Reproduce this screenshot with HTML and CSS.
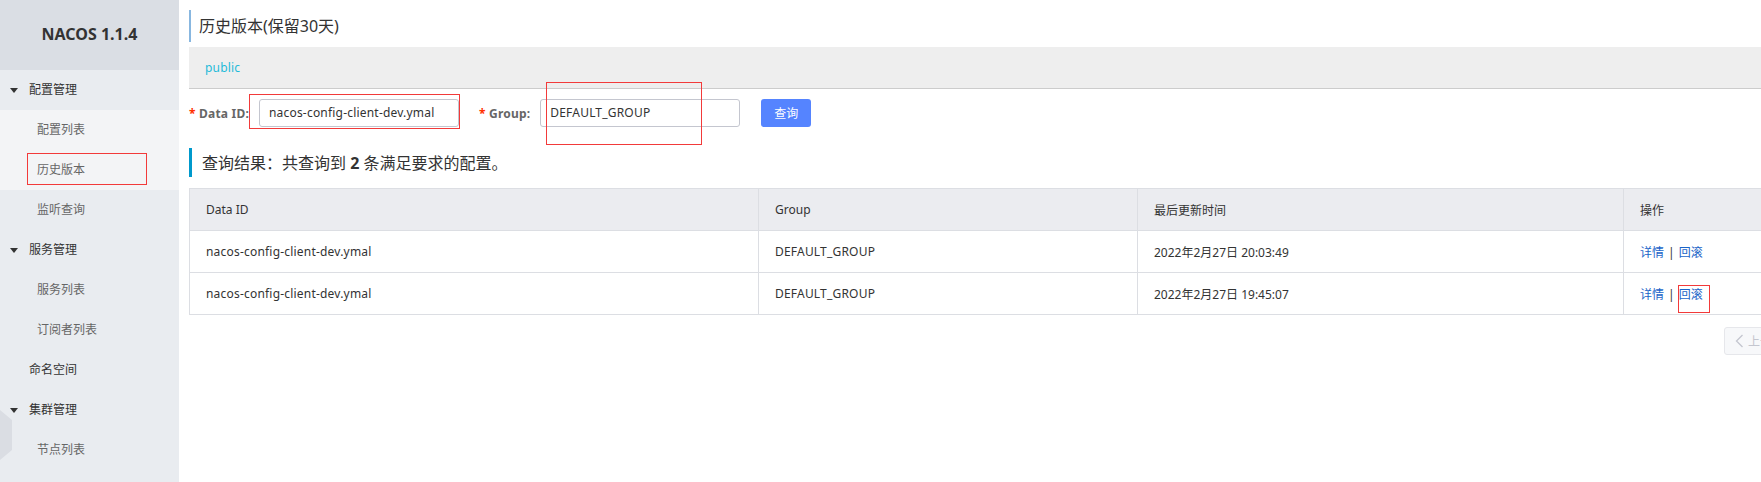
FILE: index.html
```html
<!DOCTYPE html>
<html lang="zh-CN">
<head>
<meta charset="utf-8">
<title>NACOS 1.1.4 - 历史版本</title>
<link rel="stylesheet" href="styles.css">
</head>
<body>
<div class="app">
  <aside class="sidebar">
    <div class="brand">NACOS 1.1.4</div>
    <ul class="menu">
      <li class="row top"><span class="caret"></span>配置管理</li>
      <li class="row sub light">配置列表</li>
      <li class="row sub light active">历史版本</li>
      <li class="row sub">监听查询</li>
      <li class="row top"><span class="caret"></span>服务管理</li>
      <li class="row sub">服务列表</li>
      <li class="row sub">订阅者列表</li>
      <li class="row plain">命名空间</li>
      <li class="row top"><span class="caret"></span>集群管理</li>
      <li class="row sub">节点列表</li>
    </ul>
    <div class="hex"></div>
  </aside>

  <main class="main">
    <div class="content">
      <h1 class="page-title">历史版本(保留30天)</h1>
      <div class="ns-bar"><span class="ns-link">public</span></div>

      <form class="search-form">
        <label class="field-label"><span class="req">*</span> Data ID:</label>
        <div class="input"><span>nacos-config-client-dev.ymal</span></div>
        <label class="field-label group-label"><span class="req">*</span> Group:</label>
        <div class="input"><span>DEFAULT_GROUP</span></div>
        <button type="button" class="btn-primary">查询</button>
      </form>

      <div class="result-title">查询结果：共查询到 <strong>2</strong> 条满足要求的配置。</div>

      <table class="data-table">
        <thead>
          <tr>
            <th class="c-id">Data ID</th>
            <th class="c-group">Group</th>
            <th class="c-time">最后更新时间</th>
            <th class="c-op">操作</th>
          </tr>
        </thead>
        <tbody>
          <tr>
            <td class="latin">nacos-config-client-dev.ymal</td>
            <td class="latin">DEFAULT_GROUP</td>
            <td>2022年2月27日 20:03:49</td>
            <td><a class="lnk">详情</a><span class="sep">|</span><a class="lnk">回滚</a></td>
          </tr>
          <tr>
            <td class="latin">nacos-config-client-dev.ymal</td>
            <td class="latin">DEFAULT_GROUP</td>
            <td>2022年2月27日 19:45:07</td>
            <td><a class="lnk">详情</a><span class="sep">|</span><a class="lnk">回滚</a></td>
          </tr>
        </tbody>
      </table>

      <div class="pager">
        <button type="button" class="pg-btn"><svg class="chev" width="9" height="14" viewBox="0 0 9 14"><path d="M7.5 1 L1.5 7 L7.5 13" fill="none" stroke="currentColor" stroke-width="1.3"/></svg>上一页</button>
      </div>
    </div>
  </main>

  <div class="mark mark-side"></div>
  <div class="mark mark-dataid"></div>
  <div class="mark mark-group"></div>
  <div class="mark mark-rollback"></div>
</div>
</body>
</html>
```

FILE: styles.css
```css
* { box-sizing: border-box; }
html, body {
  margin: 0;
  padding: 0;
  width: 1761px;
  height: 482px;
  overflow: hidden;
  background: #fff;
}
body {
  font-family: "Noto Sans", "Noto Sans CJK SC", sans-serif;
  font-size: 12px;
  color: #333;
}
.app {
  position: relative;
  display: flex;
  height: 482px;
  overflow: hidden;
}

/* ---------- sidebar ---------- */
.sidebar {
  position: relative;
  flex: 0 0 179px;
  width: 179px;
  background: #e9ecf0;
}
.brand {
  height: 70px;
  line-height: 68px;
  text-align: center;
  background: #dadee4;
  font-size: 16px;
  font-weight: 700;
  color: #333;
}
.menu {
  list-style: none;
  margin: 0;
  padding: 0;
}
.row {
  height: 40px;
  line-height: 40px;
  font-size: 12px;
  display: flex;
  align-items: center;
  white-space: nowrap;
}
.row.top {
  padding-left: 10px;
  color: #333;
}
.row.plain {
  padding-left: 29px;
  color: #333;
}
.row.sub {
  padding-left: 37px;
  color: #666;
}
.row.light { background: #f3f4f6; }
.caret {
  width: 0;
  height: 0;
  border-top: 5px solid #333;
  border-left: 4px solid transparent;
  border-right: 4px solid transparent;
  margin-right: 11px;
}
.hex {
  position: absolute;
  left: 0;
  top: 410px;
  width: 12px;
  height: 50px;
  background: #dadde3;
  clip-path: polygon(0 0, 100% 20%, 100% 80%, 0 100%);
}

/* ---------- main ---------- */
.main {
  flex: 1 1 auto;
  padding-left: 10px;
  overflow: hidden;
}
.content {
  width: 1640px;
}
.page-title {
  margin: 10px 0 0;
  height: 32px;
  line-height: 33px;
  padding-left: 8px;
  border-left: 2px solid #88b7e0;
  font-size: 16px;
  font-weight: 400;
  color: #333;
}
.ns-bar {
  margin-top: 5px;
  height: 42px;
  line-height: 41px;
  padding-left: 16px;
  background: #eee;
  border-bottom: 1px solid #ccc;
}
.ns-link {
  color: #1fbbd9;
  font-size: 12px;
  letter-spacing: 0.2px;
}

.search-form {
  display: flex;
  align-items: center;
  margin-top: 10px;
  height: 28px;
}
.field-label {
  font-weight: 700;
  color: #666;
  font-size: 12px;
  letter-spacing: 0.2px;
  margin-right: 10px;
  white-space: nowrap;
}
.group-label { margin-left: 20px; }
.req {
  color: #ff3000;
  font-weight: 700;
}
.input {
  width: 200px;
  height: 28px;
  border: 1px solid #c4c6cf;
  border-radius: 3px;
  padding: 0 9px;
  line-height: 26px;
  color: #333;
  font-size: 12px;
  letter-spacing: 0.2px;
  background: #fff;
  white-space: nowrap;
  overflow: hidden;
}
.btn-primary {
  margin-left: 21px;
  width: 50px;
  height: 28px;
  border: none;
  border-radius: 3px;
  background: #5584ff;
  color: #fff;
  font-family: inherit;
  font-size: 12px;
  padding: 0;
}

.result-title {
  margin-top: 21px;
  height: 29px;
  line-height: 30px;
  padding-left: 10px;
  border-left: 3px solid #0099cc;
  font-size: 16px;
  color: #333;
}
.result-title strong { font-weight: 700; }

.data-table {
  margin-top: 11px;
  border-collapse: collapse;
  table-layout: fixed;
  width: 1640px;
  border: 1px solid #dcdee3;
}
.data-table th,
.data-table td {
  height: 42px;
  padding: 0 16px;
  text-align: left;
  font-size: 12px;
  font-weight: 400;
  color: #333;
  border: 1px solid #dcdee3;
  white-space: nowrap;
}
.data-table th { background: #ebecf0; }
.data-table .latin { letter-spacing: 0.2px; }
.c-id { width: 569px; }
.c-group { width: 379px; }
.c-time { width: 486px; }
.c-op { width: 206px; }
.lnk {
  color: #1a64c8;
  cursor: pointer;
}
.sep {
  color: #333;
  margin: 0 4px;
}

.pager {
  display: flex;
  margin-top: 12px;
  margin-left: 1535px;
}
.pg-btn {
  display: flex;
  align-items: center;
  gap: 4px;
  height: 28px;
  padding: 0 10px;
  border: 1px solid #e6e7eb;
  border-radius: 3px;
  background: #f7f8fa;
  color: #c4c6cf;
  font-family: inherit;
  font-size: 12px;
  white-space: nowrap;
}
.chev { display: block; }

/* ---------- red annotation boxes ---------- */
.mark {
  position: absolute;
  border: 1px solid #f23a3a;
  pointer-events: none;
}
.mark-side { left: 27px; top: 153px; width: 120px; height: 32px; }
.mark-dataid { left: 249px; top: 94px; width: 211px; height: 35px; }
.mark-group { left: 546px; top: 82px; width: 156px; height: 63px; }
.mark-rollback { left: 1678px; top: 285px; width: 32px; height: 28px; }
```
